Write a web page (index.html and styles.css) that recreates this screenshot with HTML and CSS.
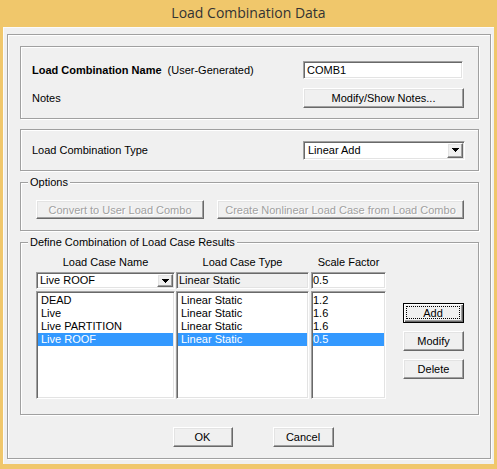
FILE: index.html
```html
<!DOCTYPE html>
<html>
<head>
<meta charset="utf-8">
<title>Load Combination Data</title>
<link rel="stylesheet" href="styles.css">
</head>
<body>
<div class="window">
  <div class="titlebar">Load Combination Data</div>
  <div class="client">
    <div class="frame etched">
      <div class="group g-name etched">
        <div class="label"><b>Load Combination Name</b><span class="hint">(User-Generated)</span></div>
        <div class="textbox sunken">COMB1</div>
        <div class="label">Notes</div>
        <div class="button raised">Modify/Show Notes...</div>
      </div>

      <div class="group g-type etched">
        <div class="label">Load Combination Type</div>
        <div class="combo combo-lg sunken">
          <span class="combo-text">Linear Add</span>
          <span class="drop raised"><svg width="7" height="4" viewBox="0 0 7 4" shape-rendering="crispEdges"><path d="M0 0h7v1h-1v1h-1v1h-1v1h-1v-1h-1v-1h-1v-1h-1z" fill="#000"/></svg></span>
        </div>
      </div>

      <fieldset class="fs g-options etched">
        <legend>Options</legend>
        <div class="options-body">
          <div class="button raised disabled b-convert">Convert to User Load Combo</div>
          <div class="button raised disabled b-create">Create Nonlinear Load Case from Load Combo</div>
        </div>
      </fieldset>

      <fieldset class="fs g-define etched">
        <legend>Define Combination of Load Case Results</legend>
        <div class="define-body">
          <div class="col col-name">
            <div class="head">Load Case Name</div>
            <div class="combo combo-sm sunken">
              <span class="combo-text">Live ROOF</span>
              <span class="drop raised"><svg width="7" height="4" viewBox="0 0 7 4" shape-rendering="crispEdges"><path d="M0 0h7v1h-1v1h-1v1h-1v1h-1v-1h-1v-1h-1v-1h-1z" fill="#000"/></svg></span>
            </div>
            <div class="list sunken">
              <div class="item">DEAD</div>
              <div class="item">Live</div>
              <div class="item">Live PARTITION</div>
              <div class="item sel">Live ROOF</div>
            </div>
          </div>
          <div class="col col-type">
            <div class="head">Load Case Type</div>
            <div class="field readonly sunken">Linear Static</div>
            <div class="list sunken">
              <div class="item">Linear Static</div>
              <div class="item">Linear Static</div>
              <div class="item">Linear Static</div>
              <div class="item sel">Linear Static</div>
            </div>
          </div>
          <div class="col col-scale">
            <div class="head">Scale Factor</div>
            <div class="field sunken">0.5</div>
            <div class="list sunken">
              <div class="item">1.2</div>
              <div class="item">1.6</div>
              <div class="item">1.6</div>
              <div class="item sel">0.5</div>
            </div>
          </div>
          <div class="actions">
            <div class="button default"><span class="focus">Add</span></div>
            <div class="button raised">Modify</div>
            <div class="button raised">Delete</div>
          </div>
        </div>
      </fieldset>

      <div class="footer">
        <div class="button raised b-ok">OK</div>
        <div class="button raised b-cancel">Cancel</div>
      </div>
    </div>
  </div>
</div>
</body>
</html>
```
FILE: styles.css
```css
* { box-sizing: border-box; }
html, body { margin: 0; padding: 0; }
body {
  width: 497px;
  height: 469px;
  overflow: hidden;
  background: #f0c76b;
  font-family: "Liberation Sans", Arial, sans-serif;
  font-size: 11px;
  color: #000;
}
.window {
  display: flex;
  flex-direction: column;
  height: 469px;
  padding: 0 3px 5px 3px;
}
.titlebar {
  height: 27px;
  line-height: 26px;
  text-align: center;
  font-family: "Open Sans", "Noto Sans", sans-serif;
  font-size: 14px;
  color: #333;
}
.client {
  flex: 1;
  display: flex;
  flex-direction: column;
  background: #f0f0f0;
  padding: 7px 3px 5px 4px;
  box-shadow: inset 1px 1px 0 #fbfbfb;
}
.etched {
  border: 1px solid #a0a0a0;
  box-shadow: inset 1px 1px 0 #fff, 1px 1px 0 #fff;
}
.frame {
  flex: 1;
  display: flex;
  flex-direction: column;
  padding: 11px 11px 0 12px;
}
.sunken {
  background: #fff;
  border: 1px solid;
  border-color: #a0a0a0 #fff #fff #a0a0a0;
  box-shadow: inset 1px 1px 0 #696969, inset -1px -1px 0 #e3e3e3;
}
.raised {
  background: #f0f0f0;
  border: 1px solid;
  border-color: #fff #696969 #696969 #fff;
  box-shadow: inset -1px -1px 0 #a0a0a0, inset 1px 1px 0 #e3e3e3;
}
.label { white-space: nowrap; }
.hint { margin-left: 6px; }

/* group 1 */
.g-name {
  height: 73px;
  display: grid;
  grid-template-columns: 1fr 160px;
  grid-template-rows: 18px 20px;
  row-gap: 9px;
  align-items: center;
  padding: 14px 15px 0 11px;
}
.textbox {
  height: 18px;
  line-height: 16px;
  padding-left: 3px;
}
.button {
  display: flex;
  align-items: center;
  justify-content: center;
  height: 20px;
  white-space: nowrap;
}
.g-name .button { width: 161px; }

/* group 2 */
.g-type {
  margin-top: 10px;
  height: 42px;
  display: flex;
  align-items: center;
  justify-content: space-between;
  padding: 0 13px 0 11px;
}
.combo {
  display: flex;
  padding: 1px;
}
.combo-text {
  flex: 1;
  padding-left: 3px;
  white-space: nowrap;
}
.drop {
  width: 16px;
  display: flex;
  align-items: center;
  justify-content: center;
}
.combo-lg {
  width: 162px;
  height: 19px;
}
.combo-lg .combo-text { line-height: 15px; }

/* fieldsets */
.fs {
  margin: 0;
  padding: 0;
  min-width: 0;
}
.fs legend {
  margin-left: 7px;
  padding: 0 2px;
  line-height: 13px;
  font-size: 11px;
  background: #f0f0f0;
}
.g-options { margin-top: 5px; }
.options-body {
  display: flex;
  gap: 13px;
  padding: 11px 14px 11px 15px;
}
.options-body .button { height: 19px; }
.b-convert { width: 168px; }
.b-create { width: 247px; }
.disabled {
  color: #a0a0a0;
  text-shadow: 1px 1px 0 #fff;
}

.g-define { margin-top: 5px; }
.define-body {
  display: flex;
  padding: 7px 0 15px 15px;
}
.col {
  display: flex;
  flex-direction: column;
}
.col-name { width: 139px; }
.col-type { width: 133px; margin-left: 1px; }
.col-scale { width: 75px; margin-left: 2px; }
.head {
  height: 13px;
  line-height: 13px;
  text-align: center;
  margin-bottom: 3px;
  white-space: nowrap;
}
.combo-sm {
  height: 17px;
}
.combo-sm .combo-text { line-height: 13px; padding-left: 2px; }
.field {
  height: 17px;
  line-height: 15px;
  padding-left: 1px;
  white-space: nowrap;
}
.field.readonly {
  background: #f0f0f0;
  padding-left: 2px;
}
.list {
  margin-top: 2px;
  height: 108px;
  padding: 2px 1px 0 1px;
}
.item {
  height: 13px;
  line-height: 13px;
  white-space: nowrap;
}
.col-name .item, .col-type .item { padding-left: 3px; }
.item.sel {
  background: #3399ff;
  color: #fff;
}
.actions {
  margin-left: 17px;
  padding-top: 47px;
  display: flex;
  flex-direction: column;
  gap: 8px;
}
.actions .button { width: 61px; }
.button.default {
  background: #f0f0f0;
  border: 1px solid #000;
  box-shadow: inset 1px 1px 0 #fff, inset -1px -1px 0 #696969, inset -2px -2px 0 #a0a0a0;
  padding: 2px 3px 3px 2px;
  align-items: stretch;
}
.focus {
  flex: 1;
  display: flex;
  align-items: center;
  justify-content: center;
  border: 1px dotted #000;
}

/* footer */
.footer {
  margin-top: 12px;
  display: flex;
  justify-content: center;
  gap: 40px;
  padding-left: 7px;
}
.b-ok { width: 60px; }
.b-cancel { width: 61px; }
```
